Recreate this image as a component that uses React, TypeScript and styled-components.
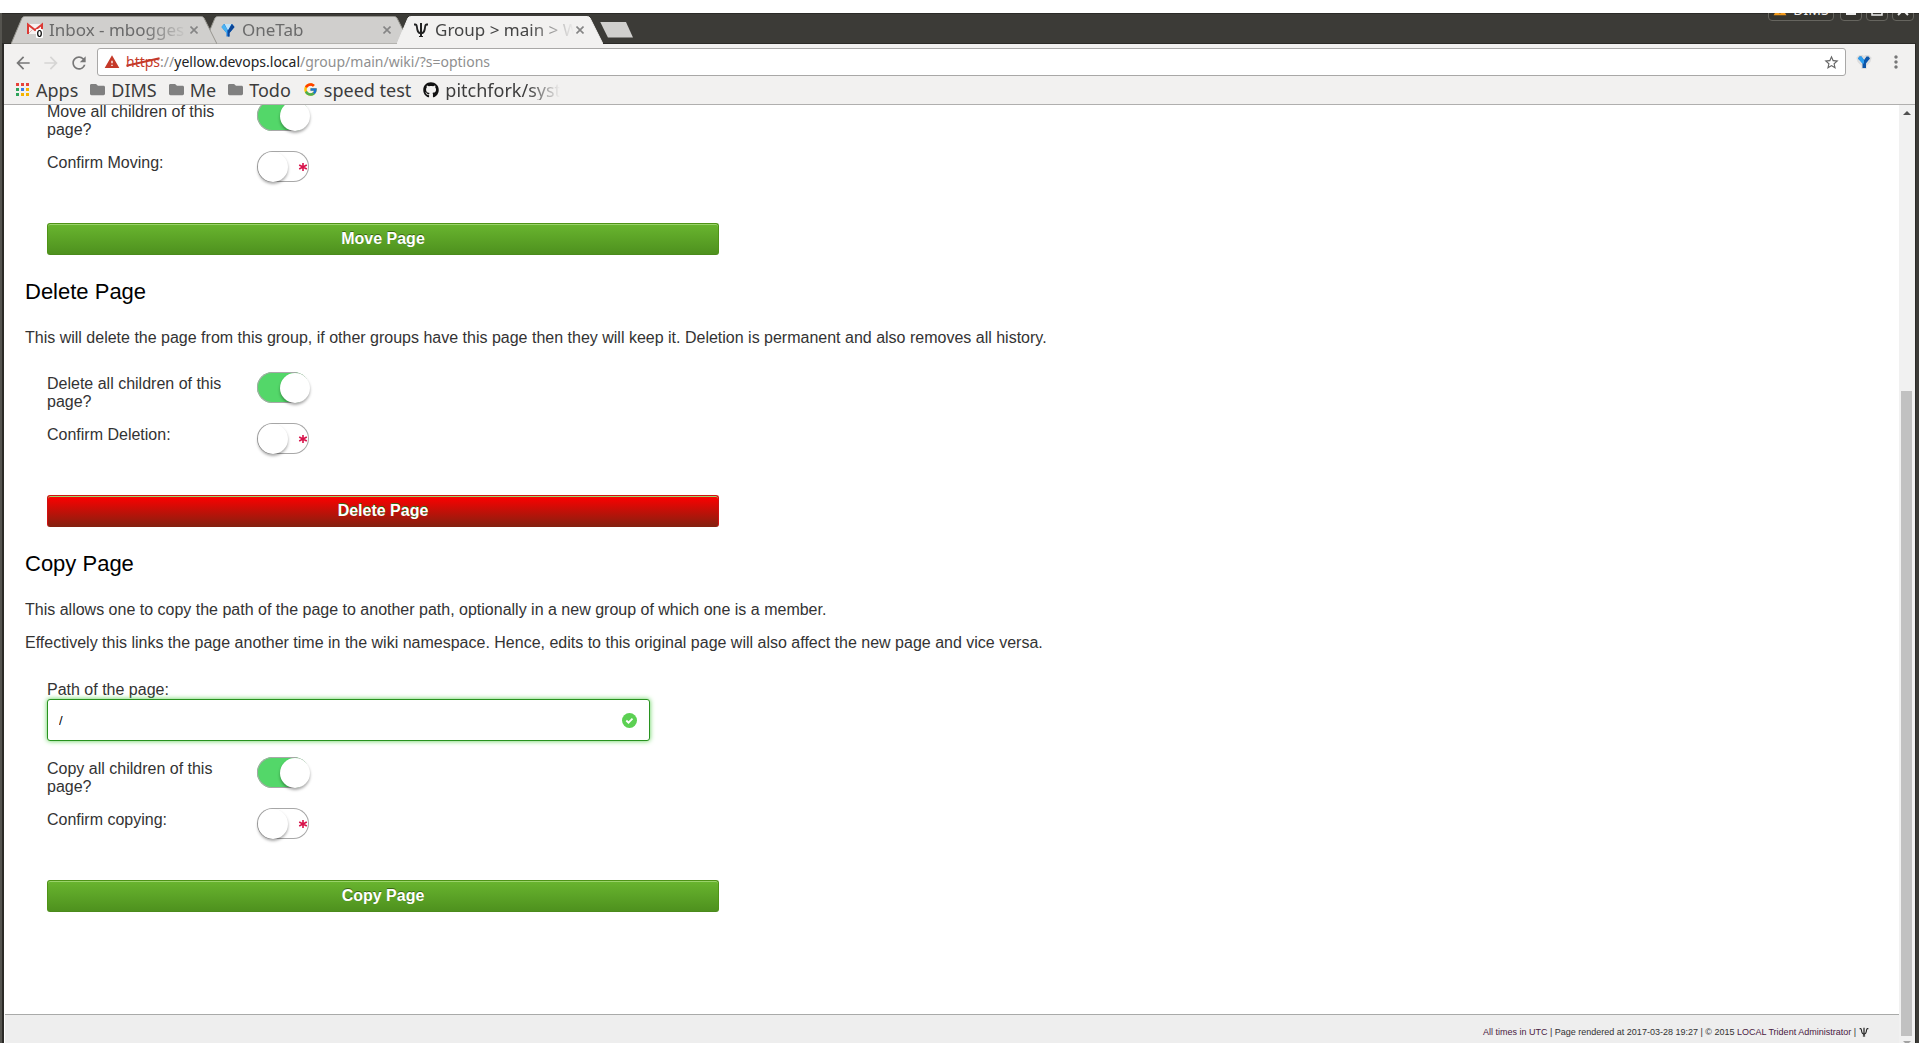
import React, { useId, useState } from "react";
import styled, { createGlobalStyle } from "styled-components";
import { FcGoogle } from "react-icons/fc";
import { FaFolder, FaGithub } from "react-icons/fa";
import { MdArrowBack, MdArrowForward, MdRefresh, MdStarBorder, MdWarning, MdMoreVert } from "react-icons/md";

const GlobalStyle = createGlobalStyle`
  * { box-sizing: border-box; }
  body { margin: 0; background: #fff; overflow: hidden; }
  button { font: inherit; }
`;

const uiFont = `"Noto Sans", "Open Sans", sans-serif`;
const pageFont = `"Liberation Sans", Arial, sans-serif`;

const Desktop = styled.div`
  height: 100vh;
  padding: 13px 0;
  display: flex;
`;

const BrowserWindow = styled.div`
  flex: 1;
  min-width: 0;
  display: flex;
  flex-direction: column;
  background: #3c3b37;
  border-left: 2px solid #55544f;
  overflow: hidden;
`;

const TitleBar = styled.header`
  height: 30px;
  flex: none;
  display: flex;
  justify-content: space-between;
  align-items: flex-end;
  padding-left: 9px;
  box-shadow: inset 0 1px #2b2a27;
`;

const TabStrip = styled.nav`
  display: flex;
  align-items: center;
  height: 27px;
`;

const TabBox = styled.div<{ $active?: boolean; $level: number }>`
  position: relative;
  z-index: ${(p) => p.$level};
  width: 206px;
  height: 28px;
  flex: none;
  margin-right: -13px;
  padding: 0 18px 0 16px;
  display: flex;
  align-items: center;
  gap: 6px;
  color: ${(p) => (p.$active ? "#444" : "#6a6a6a")};
  font: 17px/24px ${uiFont};
`;

const TabShape = styled.svg`
  position: absolute;
  inset: 0;
  width: 100%;
  height: 100%;
  z-index: -1;
`;

const TabTitle = styled.span`
  flex: 1;
  min-width: 0;
  margin-right: -5px;
  overflow: hidden;
  white-space: nowrap;
  mask-image: linear-gradient(to right, #000 calc(100% - 45px), transparent);
`;

const CloseTab = styled.button`
  flex: none;
  border: 0;
  padding: 0;
  width: 10px;
  height: 16px;
  background: none;
  display: grid;
  place-items: center;
`;

const NewTab = styled.button`
  margin-left: 10px;
  padding: 0;
  border: 0;
  width: 33px;
  height: 16px;
  background: #d0cfcd;
  clip-path: polygon(0 0, 78% 0, 100% 100%, 24% 100%);
`;

const WindowControls = styled.div`
  align-self: flex-start;
  height: 8px;
  overflow: hidden;
  display: flex;
  align-items: flex-end;
  gap: 4px;
  padding-right: 5px;
`;

const WindowButton = styled.button<{ $wide?: boolean }>`
  flex: none;
  width: ${(p) => (p.$wide ? "66px" : "22px")};
  margin-right: ${(p) => (p.$wide ? "2px" : "0")};
  height: 22px;
  padding: 0;
  border: 1px solid #66655f;
  border-radius: 4px;
  background: #35342f;
  color: #eee;
  font: 14px/20px ${uiFont};
  display: flex;
  align-items: center;
  justify-content: center;
  gap: 6px;
`;

const Frame = styled.div`
  flex: 1;
  min-height: 0;
  display: flex;
  flex-direction: column;
  margin-right: 3px;
  border-top: 1px solid #2b2a27;
  border-left: 2px solid #2b2a27;
  border-right: 1px solid #2b2a27;
  background: #f2f1f0;
`;

const Toolbar = styled.div`
  display: flex;
  align-items: center;
  height: 36px;
  padding: 0 9px;
`;

const IconButton = styled.button<{ $dim?: boolean }>`
  border: 0;
  padding: 0;
  width: 18px;
  height: 18px;
  margin-right: 10px;
  background: none;
  color: ${(p) => (p.$dim ? "#d6d5d4" : "#777")};
  display: grid;
  place-items: center;
`;

const AddressBar = styled.div`
  flex: 1;
  height: 28px;
  border: 1px solid #a9a8a7;
  border-radius: 3px;
  background: #fff;
  display: flex;
  align-items: center;
  gap: 6px;
  padding: 0 5px 0 6px;
  font: 14px/20px ${uiFont};
  color: #8f8f8f;
`;

const Url = styled.div`
  flex: 1;
  white-space: nowrap;
  outline: none;
`;

const Scheme = styled.s`
  position: relative;
  color: #c53929;
  text-decoration: none;
  &::after {
    content: "";
    position: absolute;
    inset: 9px 0 auto 0;
    height: 2px;
    background: #c53929;
    transform: rotate(-13deg);
  }
`;

const Host = styled.span`
  color: #222;
`;

const Extensions = styled.div`
  display: flex;
  align-items: center;
  gap: 14px;
  padding-left: 10px;
`;

const Bookmarks = styled.nav`
  display: flex;
  align-items: center;
  height: 25px;
  padding: 0 0 5px 12px;
  gap: 12px;
  border-bottom: 1px solid #b0afae;
`;

const Bookmark = styled.a<{ $fade?: boolean }>`
  display: flex;
  align-items: center;
  gap: 6px;
  color: #3c3c3c;
  text-decoration: none;
  white-space: nowrap;
  font: 18px/20px ${uiFont};
  mask-image: ${(p) => (p.$fade ? "linear-gradient(to right, #000 105px, transparent 137px)" : "none")};
  svg { flex: none; }
`;

const Viewport = styled.div`
  flex: 1;
  min-height: 0;
  display: flex;
  background: #fff;
`;

const Page = styled.main`
  flex: 1;
  min-width: 0;
  overflow: hidden;
  display: flex;
  flex-direction: column;
  justify-content: space-between;
  margin-left: 1px;
  font: 16px/18px ${pageFont};
  color: #333;
`;

const Content = styled.div`
  padding: 0 20px;
  margin-top: -15px;
`;

const Heading = styled.h2`
  margin: 25px 0;
  font-size: 22px;
  line-height: 24px;
  font-weight: 400;
  color: #000;
`;

const Paragraph = styled.p`
  margin: 0 0 15px;
`;

const Form = styled.form`
  width: 672px;
  max-width: 100%;
  margin-left: 22px;
  padding-top: 10px;
`;

const ToggleRow = styled.div`
  display: grid;
  grid-template-columns: 180px auto;
  justify-content: start;
  column-gap: 30px;
  height: 51px;
  align-items: start;
`;

const ToggleLabel = styled.label`
  padding-top: 3px;
`;

const Track = styled.span`
  position: relative;
  display: block;
  width: 52px;
  height: 31px;
`;

const Switch = styled.input`
  appearance: none;
  display: block;
  margin: 0;
  width: 52px;
  height: 31px;
  border-radius: 16px;
  background: #fff;
  box-shadow: inset 0 0 0 1px #a8a8a8;
  overflow: visible;
  &::before {
    content: "";
    display: block;
    width: 30px;
    height: 30px;
    margin: 1px;
    border-radius: 50%;
    background: #fff;
    box-shadow: 0 2px 3px rgba(0, 0, 0, 0.35);
  }
  &:checked { background: #53d769; }
  &:checked::before { transform: translateX(22px); }
`;

const Required = styled.span`
  position: absolute;
  right: 1px;
  top: 11px;
  line-height: 0;
  pointer-events: none;
`;

const Submit = styled.button<{ $danger?: boolean }>`
  display: block;
  width: 100%;
  height: 32px;
  margin-top: 21px;
  padding: 0;
  border: 1px solid ${(p) => (p.$danger ? "#d01010" : "#4f9317")};
  border-bottom-color: ${(p) => (p.$danger ? "#86200f" : "#4b8a1c")};
  border-radius: 3px;
  background: ${(p) => (p.$danger ? "linear-gradient(#ff0000, #86200f)" : "linear-gradient(#69b52f, #4e911e)")};
  box-shadow: inset 0 1px #9ad36a;
  color: #fff;
  font-weight: 700;
  line-height: 18px;
  text-shadow: 0 -1px #396715;
`;

const Field = styled.div`
  padding-top: 4px;
  margin-bottom: 16px;
`;

const FieldLabel = styled.label`
  display: block;
`;

const InputWrap = styled.div`
  position: relative;
  width: 603px;
  max-width: 100%;
`;

const TextInput = styled.input`
  display: block;
  width: 100%;
  height: 42px;
  padding: 0 40px 0 11px;
  border: 1px solid #28921f;
  border-radius: 3px;
  box-shadow: 0 0 5px #5cd053;
  font: 13px/18px ${pageFont};
  color: #000;
  outline: none;
`;

const ValidMark = styled.svg`
  position: absolute;
  right: 13px;
  top: 14px;
`;

const Footer = styled.footer`
  display: flex;
  justify-content: flex-end;
  align-items: center;
  gap: 3px;
  height: 29px;
  padding: 5px 30px 0 0;
  border-top: 1px solid #a9aaa9;
  background: #eee;
  font-size: 9px;
  line-height: 12px;
  color: #333;
`;

const FooterLink = styled.a`
  color: #4a1942;
  text-decoration: none;
`;

const Scrollbar = styled.div`
  flex: none;
  width: 16px;
  display: flex;
  flex-direction: column;
  background: #f1f1f1;
`;

const Arrow = styled.svg<{ $last?: boolean }>`
  flex: none;
  width: 16px;
  height: ${(p) => (p.$last ? "7px" : "16px")};
`;

const Spacer = styled.div`
  flex: 270;
`;

const Thumb = styled.div`
  flex: 645;
  margin: 0 3px 0 2px;
  background: #c1c1c1;
`;

function Trident({ size }: { size: number }) {
  return (
    <svg width={size} height={size} viewBox="0 0 16 16" fill="none" stroke="#222">
      <path d="M8 1v14" strokeWidth="2" />
      <path d="M1 2.5h1.300c1 0 1.400.8 1.600 2.300.4 4 .9 6.400 4.100 6.600 3.200-.2 3.700-2.600 4.100-6.600.2-1.500.6-2.300 1.600-2.300H15" strokeWidth="1.800" />
      <path d="M6 14.500h4" strokeWidth="1" />
    </svg>
  );
}

function OneTabLogo() {
  return (
    <svg width="16" height="16" viewBox="0 0 16 16">
      <path d="M1.500 4 3.500 2h3L8 4l1.500-2h3l2 2-1 3.500-4 4V14h-3v-2.500l-4-4z" fill="#fff" stroke="#dcdcdc" strokeWidth="2" />
      <path d="M2 4.500 3.500 2.500h2L8 6l2.500-3.500h2L14 4.500 10 9.500V14H6.500V9.500z" fill="#0d55a8" />
      <path d="M2 4.500 3.500 2.500h2L8 6v3.500H6.500z" fill="#2d9ff0" />
    </svg>
  );
}

function DiamondLogo() {
  return (
    <svg width="16" height="16" viewBox="0 0 16 16">
      <path d="M1.500 5 4 2h8l2.500 3L9.500 11v3.500h-3V11z" fill="#1670cf" />
      <path d="M1.500 5 4 2l3 5v4h-.5z" fill="#49b3f3" />
      <path d="M4.500 2h7L8 8.500z" fill="#bfe4fa" />
      <path d="M8 8.500v6h1.500V11l5-6L12 2z" fill="#0b4596" />
    </svg>
  );
}

function GmailLogo() {
  return (
    <svg width="16" height="16" viewBox="0 0 16 16">
      <path d="M1 2h14v10H1z" fill="#f7f2f1" />
      <path d="M1 12V2.500L8 8l7-5.500V12" fill="none" stroke="#dc3a35" strokeWidth="2" />
      <path d="M2 11l4-4M14 11l-4-4" stroke="#d9b5b2" strokeWidth="1" />
      <rect x="9" y="7" width="7" height="9" rx="1" fill="#fff" />
      <ellipse cx="12.500" cy="11.500" rx="1.800" ry="3" fill="none" stroke="#000" strokeWidth="1.200" />
    </svg>
  );
}

function AppsGrid() {
  const colors = ["#e8433a", "#e8433a", "#e8433a", "#2ea35a", "#3a7de8", "#f5b400", "#2ea35a", "#f5b400", "#f5b400"];
  return (
    <svg width="14" height="14" viewBox="0 0 14 14">
      {colors.map((c, i) => (
        <rect key={i} x={(i % 3) * 5} y={Math.floor(i / 3) * 5} width="3" height="3" fill={c} />
      ))}
    </svg>
  );
}

interface TabProps {
  icon: React.ReactNode;
  title: string;
  active?: boolean;
  level: number;
}

function Tab({ icon, title, active, level }: TabProps) {
  return (
    <TabBox $active={active} $level={level}>
      <TabShape viewBox="0 0 206 28" preserveAspectRatio="none">
        <path
          d="M0 28 11 2q1-1.500 2.500-1.500h177q1.500 0 2.500 1.500L206 28z"
          fill={active ? "#f2f1f0" : "#d0cfcd"}
          stroke={active ? "#f2f1f0" : "#96958f"}
        />
      </TabShape>
      {icon}
      <TabTitle>{title}</TabTitle>
      <CloseTab aria-label={`Close ${title}`}>
        <svg width="8" height="8" viewBox="0 0 8 8" stroke="#858585" strokeWidth="1.600">
          <path d="M.5.5l7 7M7.500.5l-7 7" />
        </svg>
      </CloseTab>
    </TabBox>
  );
}

function ToggleField({ label, on, required }: { label: string; on?: boolean; required?: boolean }) {
  const id = useId();
  return (
    <ToggleRow>
      <ToggleLabel htmlFor={id}>{label}</ToggleLabel>
      <Track>
        <Switch id={id} type="checkbox" defaultChecked={on} />
        {required && (
          <Required>
            <svg width="10" height="10" viewBox="0 0 10 10" stroke="#d8124a" strokeWidth="1.600">
              <path d="M5 1v8M1.200 3l7.600 4M8.800 3 1.200 7" />
            </svg>
          </Required>
        )}
      </Track>
    </ToggleRow>
  );
}

function PathField() {
  const id = useId();
  const [path, setPath] = useState("/");
  return (
    <Field>
      <FieldLabel htmlFor={id}>Path of the page:</FieldLabel>
      <InputWrap>
        <TextInput id={id} type="text" value={path} onChange={(e) => setPath(e.target.value)} />
        <ValidMark width="15" height="15" viewBox="0 0 15 15">
          <circle cx="7.500" cy="7.500" r="7.500" fill="#5cd053" />
          <path d="M4.300 7.500l2.200 2.200 4-4" fill="none" stroke="#fff" strokeWidth="1.800" />
        </ValidMark>
      </InputWrap>
    </Field>
  );
}

export default function App() {
  return (
    <Desktop>
      <GlobalStyle />
      <BrowserWindow>
        <TitleBar>
          <TabStrip>
            <Tab icon={<GmailLogo />} title="Inbox - mbogges" level={2} />
            <Tab icon={<DiamondLogo />} title="OneTab" level={1} />
            <Tab icon={<Trident size={16} />} title="Group > main > W" active level={3} />
            <NewTab aria-label="New tab" />
          </TabStrip>
          <WindowControls>
            <WindowButton $wide>
              <MdWarning size={14} color="#f39a1c" />
              DIMS
            </WindowButton>
            <WindowButton aria-label="Minimize">
              <svg width="12" height="12" viewBox="0 0 12 12"><path d="M1 9h10v2H1z" fill="#eee" /></svg>
            </WindowButton>
            <WindowButton aria-label="Maximize">
              <svg width="12" height="12" viewBox="0 0 12 12"><path d="M1 1h10v10H1z" fill="none" stroke="#eee" strokeWidth="1.500" /></svg>
            </WindowButton>
            <WindowButton aria-label="Close">
              <svg width="12" height="12" viewBox="0 0 12 12"><path d="M1 1l10 10M11 1 1 11" stroke="#eee" strokeWidth="2" /></svg>
            </WindowButton>
          </WindowControls>
        </TitleBar>
        <Frame>
          <Toolbar>
            <IconButton aria-label="Back"><MdArrowBack size={20} /></IconButton>
            <IconButton aria-label="Forward" $dim><MdArrowForward size={20} /></IconButton>
            <IconButton aria-label="Reload"><MdRefresh size={20} /></IconButton>
            <AddressBar>
              <MdWarning size={16} color="#c53929" />
              <Url role="textbox" aria-label="Address">
                <Scheme>https</Scheme>://<Host>yellow.devops.local</Host>/group/main/wiki/?s=options
              </Url>
              <MdStarBorder size={17} color="#666" />
            </AddressBar>
            <Extensions>
              <OneTabLogo />
              <MdMoreVert size={20} color="#777" />
            </Extensions>
          </Toolbar>
          <Bookmarks>
            <Bookmark href="#"><AppsGrid />Apps</Bookmark>
            <Bookmark href="#"><FaFolder size={15} color="#808080" />DIMS</Bookmark>
            <Bookmark href="#"><FaFolder size={15} color="#808080" />Me</Bookmark>
            <Bookmark href="#"><FaFolder size={15} color="#808080" />Todo</Bookmark>
            <Bookmark href="#"><FcGoogle size={15} />speed test</Bookmark>
            <Bookmark href="#" $fade><FaGithub size={16} color="#111" />pitchfork/syste</Bookmark>
          </Bookmarks>
          <Viewport>
            <Page>
              <Content>
                <Form>
                  <ToggleField label="Move all children of this page?" on />
                  <ToggleField label="Confirm Moving:" required />
                  <Submit type="button">Move Page</Submit>
                </Form>
                <Heading>Delete Page</Heading>
                <Paragraph>
                  This will delete the page from this group, if other groups have this page then they will keep it. Deletion is permanent and also removes all history.
                </Paragraph>
                <Form>
                  <ToggleField label="Delete all children of this page?" on />
                  <ToggleField label="Confirm Deletion:" required />
                  <Submit type="button" $danger>Delete Page</Submit>
                </Form>
                <Heading>Copy Page</Heading>
                <Paragraph>This allows one to copy the path of the page to another path, optionally in a new group of which one is a member.</Paragraph>
                <Paragraph>
                  Effectively this links the page another time in the wiki namespace. Hence, edits to this original page will also affect the new page and vice versa.
                </Paragraph>
                <Form>
                  <PathField />
                  <ToggleField label="Copy all children of this page?" on />
                  <ToggleField label="Confirm copying:" required />
                  <Submit type="button">Copy Page</Submit>
                </Form>
              </Content>
              <Footer>
                <span>
                  <FooterLink href="#">All times in UTC</FooterLink> | Page rendered at 2017-03-28 19:27 | © 2015{" "}
                  <FooterLink href="#">LOCAL Trident Administrator</FooterLink> |
                </span>
                <Trident size={10} />
              </Footer>
            </Page>
            <Scrollbar>
              <Arrow viewBox="0 0 16 16"><path d="M4 10l4-4 4 4z" fill="#505050" /></Arrow>
              <Spacer />
              <Thumb />
              <Arrow $last viewBox="0 0 16 7"><path d="M4 5h8l-4 4z" fill="#a3a3a3" /></Arrow>
            </Scrollbar>
          </Viewport>
        </Frame>
      </BrowserWindow>
    </Desktop>
  );
}
